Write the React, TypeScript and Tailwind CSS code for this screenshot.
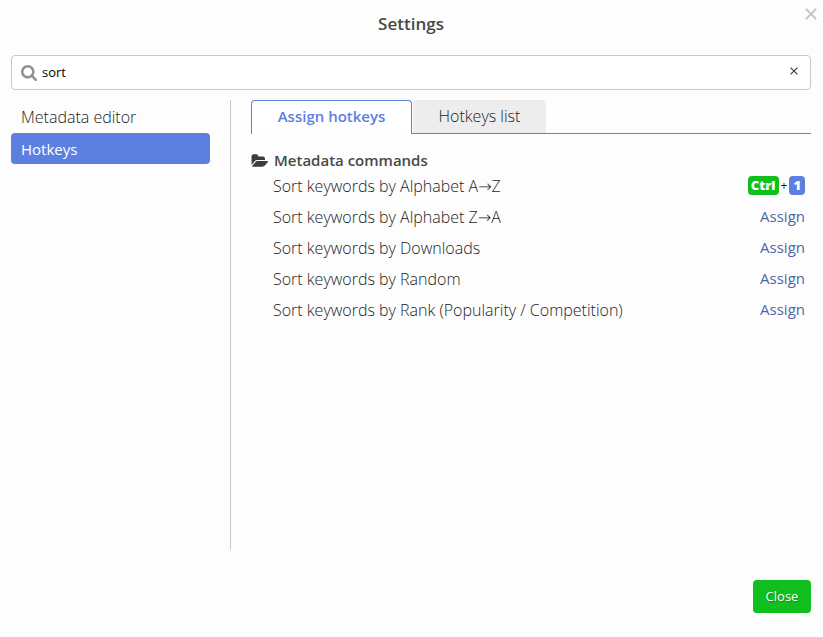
import { useState } from "react";

type Command = { name: string; keys?: string[] };

const sections = ["Metadata editor", "Hotkeys"];

const commands: Command[] = [
  { name: "Sort keywords by Alphabet A→Z", keys: ["Ctrl", "1"] },
  { name: "Sort keywords by Alphabet Z→A" },
  { name: "Sort keywords by Downloads" },
  { name: "Sort keywords by Random" },
  { name: "Sort keywords by Rank (Popularity / Competition)" },
];

function SearchIcon() {
  return (
    <svg className="size-4 shrink-0" viewBox="64 128 1664 1664" fill="#8f8f8f" aria-hidden="true">
      <path d="M1216 832q0-185-131.5-316.5t-316.5-131.5-316.5 131.5-131.5 316.5 131.5 316.5 316.5 131.5 316.5-131.5 131.5-316.5zm512 832q0 52-38 90t-90 38q-54 0-90-38l-343-342q-179 124-399 124-143 0-273.5-55.5t-225-150-150-225-55.5-273.5 55.5-273.5 150-225 225-150 273.5-55.5 273.5 55.5 225 150 150 225 55.5 273.5q0 220-124 399l343 343q37 37 37 90z" />
    </svg>
  );
}

function FolderOpenIcon() {
  return (
    <svg className="h-[13px] w-[17px] shrink-0" viewBox="0 128 1943 1408" fill="#3c3c3c" aria-hidden="true">
      <path d="M1943 952q0 31-31 66l-336 396q-43 51-120.500 86.500t-143.500 35.500h-1088q-34 0-60.500-13t-26.500-43q0-31 31-66l336-396q43-51 120.500-86.500t143.500-35.500h1088q34 0 60.500 13t26.500 43zm-343-344v160h-832q-94 0-197 47.500t-164 119.500l-337 396-5 6q0-4-.5-12.500t-.5-12.500v-960q0-92 66-158t158-66h320q92 0 158 66t66 158v32h544q92 0 158 66t66 158z" />
    </svg>
  );
}

function CrossIcon({ className }: { className: string }) {
  return (
    <svg className={className} viewBox="0 0 10 10" fill="none" stroke="currentColor" aria-hidden="true">
      <path d="M0.700 0.700L9.300 9.300M9.300 0.700L0.700 9.300" />
    </svg>
  );
}

export default function App() {
  const [query, setQuery] = useState("sort");

  return (
    <main className="flex min-h-screen flex-col bg-[#fdfdfd] pr-3 pb-6 pl-[11px] font-['Open_Sans','DejaVu_Sans',sans-serif] text-[16px] font-light text-[#1c1c1c]">
      <header className="grid h-[55px] grid-cols-[1fr_auto_1fr] items-start">
        <h1 className="col-start-2 pt-3 text-[17px] leading-6 font-semibold text-[#484848]">Settings</h1>
        <button type="button" aria-label="Close settings" className="-mr-1.5 justify-self-end pt-2 text-[#c8c8c8]">
          <CrossIcon className="size-3 stroke-[1.7]" />
        </button>
      </header>

      <div className="flex h-[35px] items-center rounded-[4px] border border-[#c8c8c8] bg-white pr-3 pl-[9px]">
        <SearchIcon />
        <input
          type="text"
          aria-label="Search settings"
          value={query}
          onChange={(e) => setQuery(e.target.value)}
          className="min-w-0 flex-1 px-[5px] text-[13px] font-normal text-black outline-none"
        />
        <button type="button" aria-label="Clear search" onClick={() => setQuery("")} className="pb-[3px] text-[#404040]">
          <CrossIcon className="size-2 stroke-[1.5]" />
        </button>
      </div>

      <div className="mt-2.5 flex min-h-[450px] flex-1">
        <nav className="flex w-[199px] shrink-0 flex-col gap-0.5">
          {sections.map((s) => (
            <button
              key={s}
              type="button"
              className={
                s === "Hotkeys"
                  ? "h-[31px] rounded-[4px] bg-[#5c80e0] px-2.5 pt-0.5 text-left text-[15px] font-medium text-white"
                  : "h-[31px] px-2.5 pt-0.5 text-left"
              }
            >
              {s}
            </button>
          ))}
        </nav>

        <section className="ml-5 min-w-0 flex-1 border-l border-[#c8c8c8] pl-5">
          <div role="tablist" className="flex h-[34px] items-stretch">
            <button
              type="button"
              role="tab"
              aria-selected="true"
              className="w-[161px] rounded-t-[4px] border-x border-t border-[#5c80e0] bg-white pb-0.5 text-[15px] font-semibold text-[#5c80e0]"
            >
              Assign hotkeys
            </button>
            <div className="flex flex-1 border-b border-[#5c80e0] pl-[1px]">
              <button type="button" role="tab" aria-selected="false" className="w-[133px] rounded-t-[4px] bg-[#ededed] pb-0.5">
                Hotkeys list
              </button>
            </div>
          </div>

          <h2 className="mt-4 flex h-5 items-center gap-1.5 text-[15px] font-semibold text-[#484848]">
            <FolderOpenIcon />
            Metadata commands
          </h2>
          <ul className="pr-1.5 pl-[22px]">
            {commands.map((c) => (
              <li key={c.name} className="flex h-[31px] items-center justify-between">
                <span>{c.name}</span>
                {c.keys ? (
                  <button type="button" className="flex items-center text-[13px] leading-[19px]">
                    <kbd className="rounded-[4px] bg-[#0fbf1d] px-[3px] font-['Open_Sans'] font-extrabold text-white">{c.keys[0]}</kbd>
                    <span className="px-0.5 text-xs font-normal">+</span>
                    <kbd className="rounded-[4px] bg-[#5c80e0] px-1 font-['Open_Sans'] font-extrabold text-white">{c.keys[1]}</kbd>
                  </button>
                ) : (
                  <button type="button" className="text-[15px] font-normal text-[#4c66a8]">
                    Assign
                  </button>
                )}
              </li>
            ))}
          </ul>
        </section>
      </div>

      <footer className="mt-[30px] flex justify-end">
        <button type="button" className="h-[33px] min-w-[58px] rounded-[4px] bg-[#0fbf1d] px-3 text-[13px] font-normal text-white text-shadow-[1px_1px_1px_#00000040]">
          Close
        </button>
      </footer>
    </main>
  );
}
